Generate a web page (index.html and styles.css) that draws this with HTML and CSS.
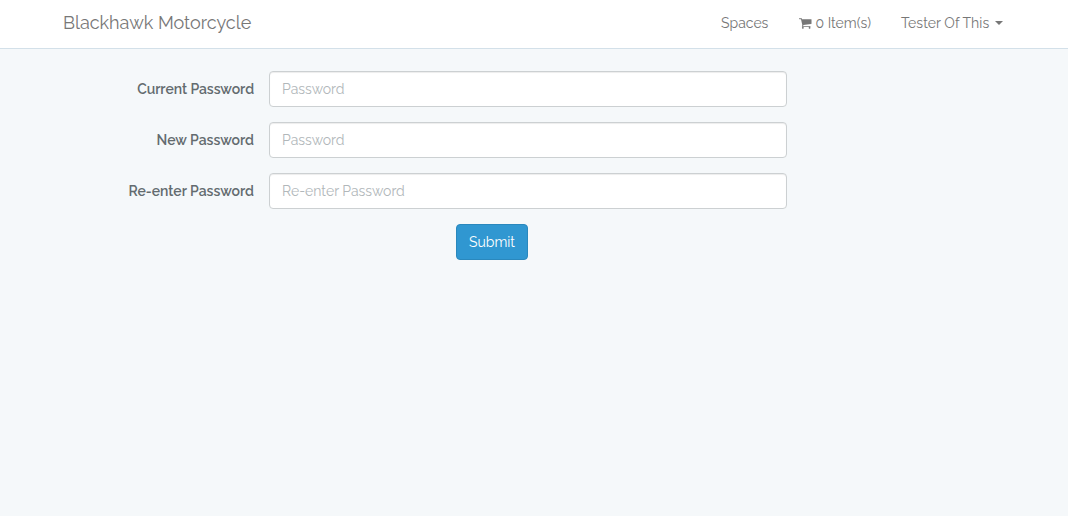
FILE: index.html
```html
<!DOCTYPE html>
<html lang="en">
<head>
<meta charset="utf-8">
<title>Blackhawk Motorcycle</title>
<link rel="stylesheet" href="styles.css">
</head>
<body>
<nav class="navbar">
  <a class="brand">Blackhawk Motorcycle</a>
  <div class="links">
    <a class="link spaces">Spaces</a>
    <a class="link cart"><svg class="cart-icon" viewBox="0 0 1664 1792"><path fill="currentColor" d="M640 1536q0 52-38 90t-90 38-90-38-38-90 38-90 90-38 90 38 38 90zm896 0q0 52-38 90t-90 38-90-38-38-90 38-90 90-38 90 38 38 90zm128-1088v512q0 24-16.500 42.500t-40.500 21.500l-1044 122q13 60 13 70 0 16-24 64h920q26 0 45 19t19 45-19 45-45 19h-1024q-26 0-45-19t-19-45q0-11 8-31.500t16-36 21.500-40 15.500-29.500l-177-823h-204q-26 0-45-19t-19-45 19-45 45-19h256q16 0 28.500 6.500t19.500 15.500 13 24.500 8 26 5.500 29.500 4.500 26h1201q26 0 45 19t19 45z"/></svg><span>0 Item(s)</span></a>
    <a class="link user"><span class="user-name">Tester Of This</span><span class="caret"></span></a>
  </div>
</nav>
<form class="form">
  <div class="row"><label class="label label-current" for="p1">Current Password</label><input class="field" id="p1" type="password" placeholder="Password"></div>
  <div class="row"><label class="label" for="p2">New Password</label><input class="field" id="p2" type="password" placeholder="Password"></div>
  <div class="row"><label class="label" for="p3">Re-enter Password</label><input class="field" id="p3" type="password" placeholder="Re-enter Password"></div>
  <button class="submit" type="button">Submit</button>
</form>
</body>
</html>
```
FILE: styles.css
```css
* { box-sizing: border-box; }
body {
  margin: 0;
  background: #f5f8fa;
  color: #636b6f;
  font: 14px/22px Raleway, Lato, "Open Sans", sans-serif;
}
.navbar {
  display: flex;
  justify-content: space-between;
  height: 49px;
  padding: 12px 65px 0 63px;
  background: #fff;
  border-bottom: 1px solid #d3e0e9;
  color: #777;
}
.brand { font-size: 18px; white-space: nowrap; }
.links { display: flex; gap: 30px; }
.link { display: flex; align-items: center; height: 22px; white-space: nowrap; }
.spaces { width: 48px; }
.cart { width: 72px; gap: 4px; }
.cart-icon { width: 13px; height: 14px; }
.user { width: 102px; justify-content: space-between; }
.user-name { letter-spacing: 0.06px; }
.caret {
  border-top: 4px solid;
  border-left: 4px solid transparent;
  border-right: 4px solid transparent;
}
.form { padding-top: 22px; }
.row { display: flex; align-items: center; height: 36px; margin-bottom: 15px; }
.label { width: 254px; margin-right: 15px; text-align: right; font-weight: 600; }
.label-current { letter-spacing: -0.05px; }
.field {
  width: 518px;
  height: 36px;
  padding: 6px 12px;
  border: 1px solid #ccd0d2;
  border-radius: 4px;
  background: #fff;
  box-shadow: inset 0 1px 1px rgba(0, 0, 0, .075);
  font: inherit;
}
.field::placeholder { color: #b1b7ba; opacity: 1; }
.submit {
  display: block;
  width: 72px;
  height: 36px;
  margin-left: 456px;
  padding: 0;
  border: 1px solid #2a88bd;
  border-radius: 4px;
  background: #3097d1;
  color: #fff;
  font: inherit;
}
```
